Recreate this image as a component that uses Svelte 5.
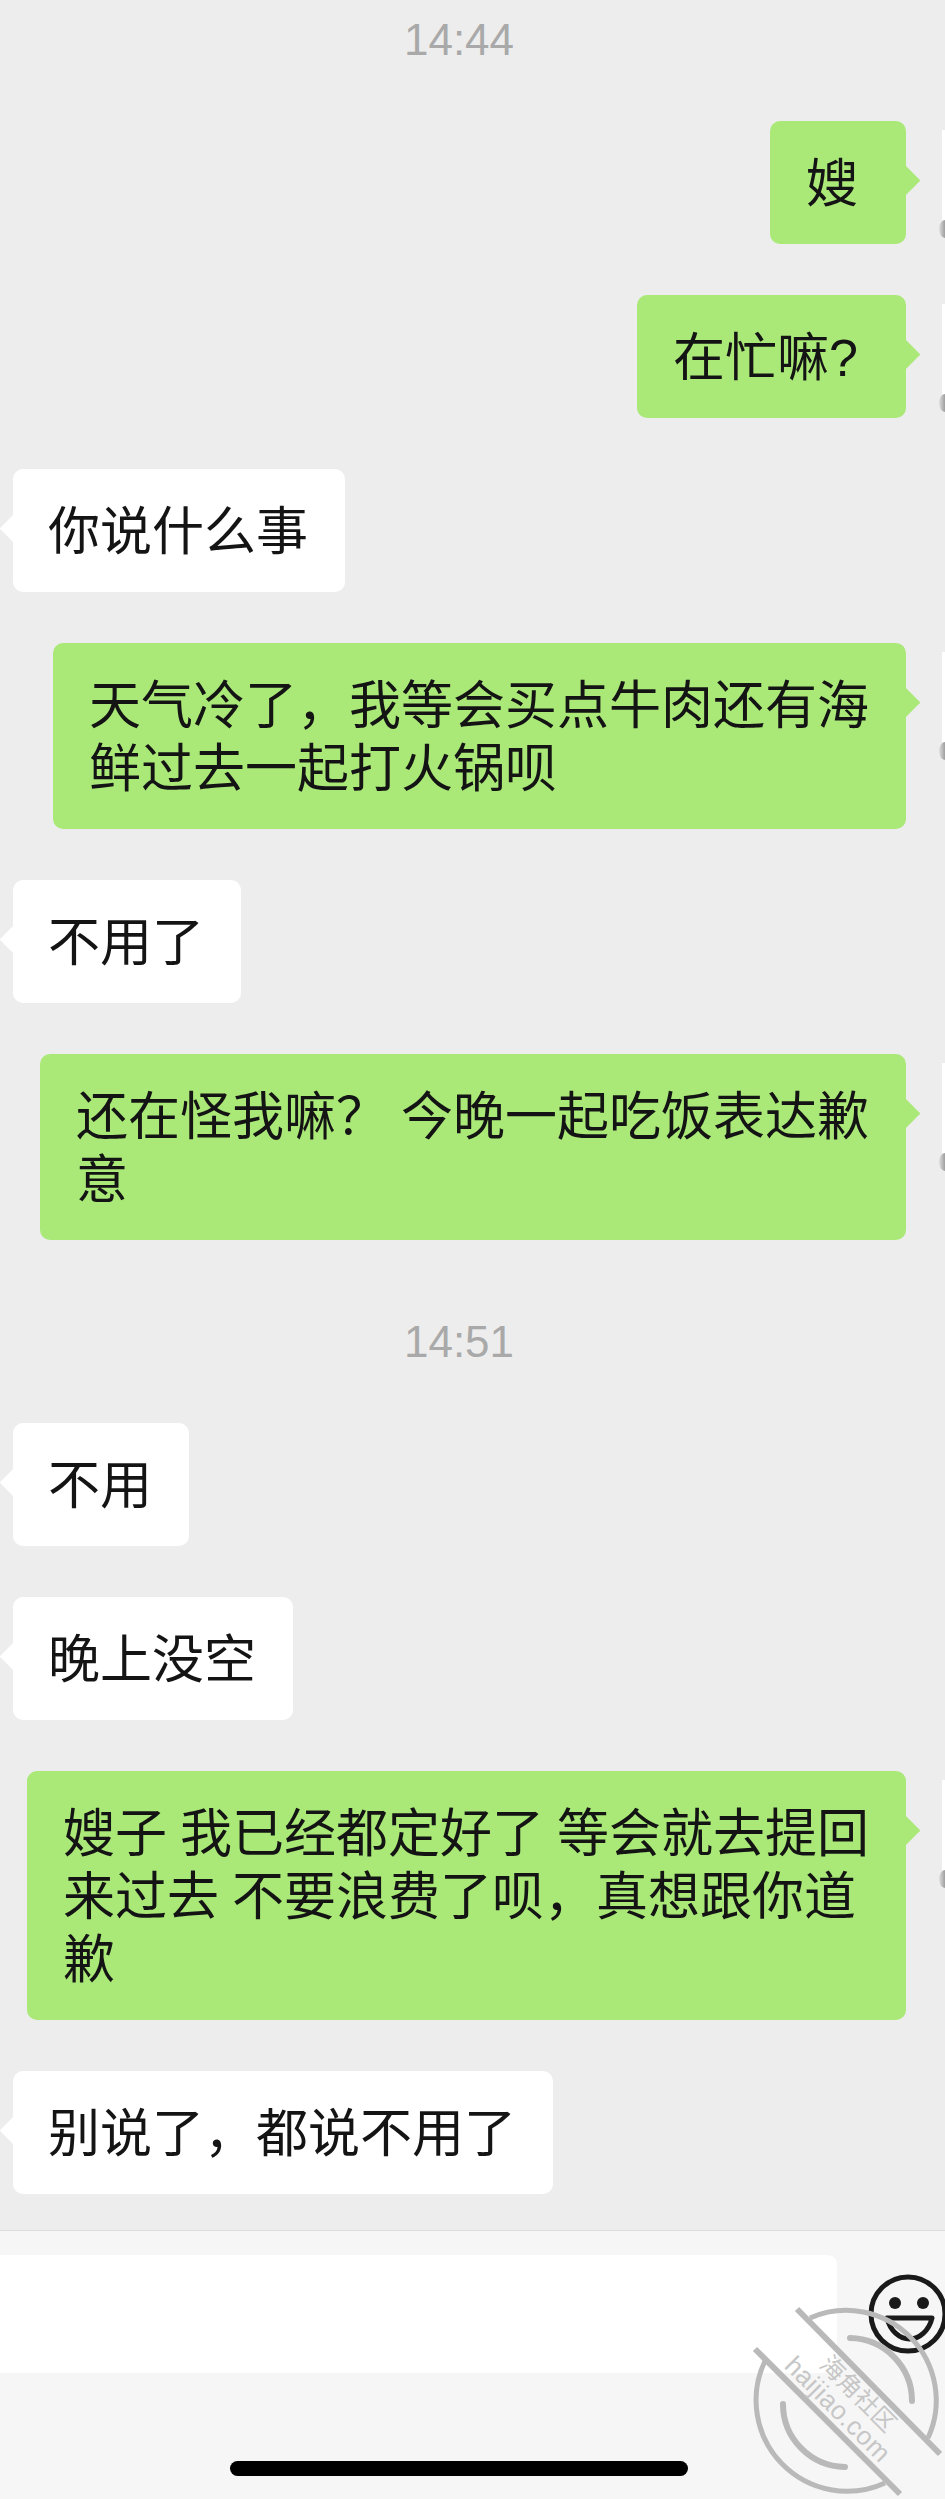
<script lang="ts">
  type Msg =
    | { kind: 'time'; text: string }
    | { kind: 'me' | 'them'; lines: string[]; short?: boolean };

  const messages: Msg[] = [
    { kind: 'time', text: '14:44' },
    { kind: 'me', lines: ['嫂'], short: true },
    { kind: 'me', lines: ['在忙嘛?'], short: true },
    { kind: 'them', lines: ['你说什么事'] },
    { kind: 'me', lines: ['天气冷了，我等会买点牛肉还有海', '鲜过去一起打火锅呗'] },
    { kind: 'them', lines: ['不用了'] },
    { kind: 'me', lines: ['还在怪我嘛？ 今晚一起吃饭表达歉', '意'] },
    { kind: 'time', text: '14:51' },
    { kind: 'them', lines: ['不用'] },
    { kind: 'them', lines: ['晚上没空'] },
    { kind: 'me', lines: ['嫂子 我已经都定好了 等会就去提回', '来过去 不要浪费了呗，真想跟你道', '歉'] },
    { kind: 'them', lines: ['别说了，都说不用了'] },
  ];
</script>

<div class="screen">
  <div class="chat">
    {#each messages as m}
      {#if m.kind === 'time'}
        <div class="time">{m.text}</div>
      {:else}
        <div class="row {m.kind}">
          <div class="bubble" class:short={m.short}>
            {#each m.lines as line}
              <div>{line}</div>
            {/each}
          </div>
          {#if m.kind === 'me'}
            <span class="avatar"></span>
          {/if}
        </div>
      {/if}
    {/each}
  </div>

  <div class="bar">
    <div class="input"></div>
    <svg class="smiley" width="84" height="84" viewBox="0 0 84 84" fill="none">
      <circle cx="41" cy="40" r="37" stroke="#1a1a1a" stroke-width="5" />
      <circle cx="28" cy="29" r="6" fill="#1a1a1a" />
      <circle cx="56" cy="29" r="6" fill="#1a1a1a" />
      <path d="M20 44H65C62 57 52 65 42.5 65S23 57 20 44Z" stroke="#1a1a1a" stroke-width="5" stroke-linejoin="round" />
    </svg>
    <div class="home"></div>
    <div class="stamp">
      <svg width="200" height="200" viewBox="0 0 200 200" fill="none" stroke="#b9b9b9" stroke-width="5" stroke-linecap="round">
        <path d="M62 18A90 90 0 0 1 180 138" stroke-linecap="butt" />
        <path d="M17 61A91 91 0 0 0 137 183" stroke-linecap="butt" />
        <path d="M49 9L192 154" stroke-width="6" stroke-linecap="butt" />
        <path d="M7 49L152 194" stroke-width="6" stroke-linecap="butt" />
        <path d="M102 38A63 63 0 0 1 164 101" stroke-width="6" />
        <path d="M35 104A63 63 0 0 0 97 167" stroke-width="6" />
      </svg>
      <span class="stamp-cn">海角社区</span>
      <span class="stamp-en">haijiao.com</span>
    </div>
  </div>
</div>

<style>
  :global(body) {
    margin: 0;
    background: #ededed;
  }

  .screen {
    position: relative;
    width: 945px;
    height: 2499px;
    overflow: hidden;
    display: flex;
    flex-direction: column;
    background: #ededed;
    font-family: "Liberation Sans", "Noto Sans CJK SC", sans-serif;
  }

  .chat {
    flex: 1;
    display: flex;
    flex-direction: column;
    gap: 51px;
  }

  .time {
    margin: 29px 0 8px;
    padding-right: 27px;
    text-align: center;
    font-size: 44px;
    line-height: 44px;
    color: #a9a9a9;
  }
  .time:first-child {
    margin-top: 18px;
  }

  .row {
    position: relative;
    display: flex;
  }
  .row.me {
    justify-content: flex-end;
    padding-right: 39px;
  }
  .row.them {
    padding-left: 13px;
  }

  .bubble {
    position: relative;
    padding: 32px 37px 28px 35px;
    border-radius: 10px;
    font-size: 52px;
    line-height: 63px;
    word-spacing: -1.5px;
    white-space: nowrap;
    color: #141414;
    background: #fff;
  }
  .me .bubble {
    padding-left: 36px;
    padding-right: 37px;
    background: #aae978;
  }
  .me .bubble.short {
    padding-right: 48px;
  }

  .bubble::after {
    content: '';
    position: absolute;
    top: 49px;
    width: 21px;
    height: 21px;
    transform: rotate(45deg);
    background: inherit;
    border-radius: 1px;
  }
  .me .bubble::after {
    right: -10px;
  }
  .them .bubble::after {
    left: -9px;
  }

  .avatar {
    position: absolute;
    top: 9px;
    left: 942px;
    width: 10px;
    height: 90px;
    background: #fff;
  }
  .avatar::after {
    content: '';
    position: absolute;
    top: 90px;
    left: -3px;
    width: 12px;
    height: 18px;
    border-radius: 50%;
    background: linear-gradient(90deg, #dedede, #5f5f5f);
  }

  .bar {
    position: relative;
    flex: 0 0 269px;
    box-sizing: border-box;
    border-top: 1px solid #dcdcdc;
    background: #f6f6f6;
  }

  .input {
    width: 837px;
    height: 118px;
    margin-top: 24px;
    border-radius: 0 9px 9px 0;
    background: #fff;
  }

  .smiley {
    position: absolute;
    top: 43px;
    left: 867px;
  }

  .home {
    position: absolute;
    top: 230px;
    left: 230px;
    width: 458px;
    height: 15px;
    border-radius: 8px;
    background: #000;
  }

  .stamp {
    position: absolute;
    top: 69px;
    left: 748px;
    width: 200px;
    height: 200px;
  }
  .stamp-cn,
  .stamp-en {
    position: absolute;
    color: #c6c6c6;
    white-space: nowrap;
    transform: translate(-50%, -50%) rotate(45deg);
  }
  .stamp-cn {
    top: 94px;
    left: 110px;
    font-size: 24px;
    line-height: 28px;
  }
  .stamp-en {
    top: 109px;
    left: 90px;
    font-size: 26px;
    line-height: 30px;
    letter-spacing: 0.5px;
  }
</style>
